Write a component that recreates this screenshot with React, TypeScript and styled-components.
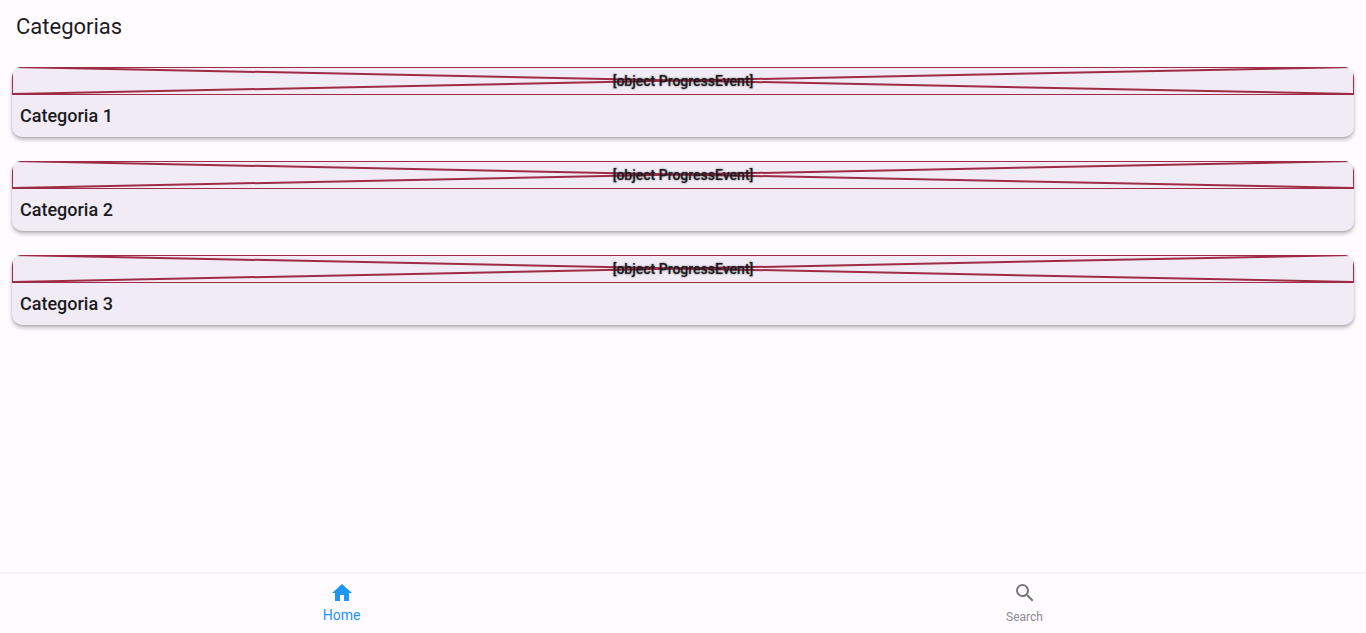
import React from "react";
import styled, { createGlobalStyle } from "styled-components";

const GlobalStyle = createGlobalStyle`
  * { box-sizing: border-box; }
  body {
    margin: 0;
    background: #fffbff;
    color: #1c1b1f;
    font-family: Roboto, "Liberation Sans", sans-serif;
  }
`;

const Page = styled.div`
  display: flex;
  flex-direction: column;
  min-height: 100vh;
`;

const Header = styled.header`
  padding: 12px 16px 14px;
`;

const Title = styled.h1`
  margin: 0;
  font-size: 22px;
  line-height: 29px;
  font-weight: 400;
`;

const List = styled.main`
  flex: 1;
  display: flex;
  flex-direction: column;
  gap: 24px;
  padding: 12px;
`;

const Card = styled.article`
  overflow: hidden;
  border-radius: 10px;
  background: #f0ebf5;
  box-shadow: 0 3px 4px rgba(0, 0, 0, 0.24), 0 1px 2px rgba(0, 0, 0, 0.12);
`;

const Placeholder = styled.div`
  display: grid;
  height: 28px;
  border: 1px solid #9f2b44;
  place-items: center;

  > * {
    grid-area: 1 / 1;
  }
`;

const Cross = styled.svg`
  display: block;
  width: 100%;
  height: 26px;
  overflow: visible;

  line {
    stroke: #9f2b44;
    stroke-width: 2px;
    vector-effect: non-scaling-stroke;
  }
`;

const ErrorText = styled.span`
  position: relative;
  font-size: 14px;
  line-height: 20px;
  font-weight: 500;
  text-shadow: 0 0 2px rgba(0, 0, 0, 0.6);
`;

const CardTitle = styled.h2`
  margin: 0;
  padding: 8px;
  font-size: 18px;
  line-height: 26px;
  font-weight: 500;
`;

const NavBar = styled.nav`
  display: flex;
  height: 61px;
  border-top: 2px solid #f5f1f6;
`;

const NavLink = styled.a<{ $active?: boolean }>`
  flex: 1;
  display: flex;
  flex-direction: column;
  align-items: center;
  padding-top: 7px;
  color: ${(p) => (p.$active ? "#2196f3" : "#757477")};
  font-size: ${(p) => (p.$active ? 14 : 12)}px;
  line-height: ${(p) => (p.$active ? 20 : 24)}px;
  text-decoration: none;
`;

const NavIcon = styled.svg`
  flex: none;
  width: 24px;
  height: 24px;
  fill: currentColor;
`;

const NavLabel = styled.span<{ $active?: boolean }>`
  color: ${(p) => (p.$active ? "#2196f3" : "#8b898c")};
`;

const categories = ["Categoria 1", "Categoria 2", "Categoria 3"];

export default function App() {
  return (
    <>
      <GlobalStyle />
      <Page>
        <Header>
          <Title>Categorias</Title>
        </Header>
        <List>
          {categories.map((name) => (
            <Card key={name}>
              <Placeholder>
                <Cross viewBox="0 0 100 26" preserveAspectRatio="none" aria-hidden="true">
                  <line x1="0" y1="-1" x2="100" y2="26" />
                  <line x1="100" y1="-1" x2="0" y2="26" />
                </Cross>
                <ErrorText>[object ProgressEvent]</ErrorText>
              </Placeholder>
              <CardTitle>{name}</CardTitle>
            </Card>
          ))}
        </List>
        <NavBar>
          <NavLink href="#home" $active aria-current="page">
            <NavIcon viewBox="0 0 24 24" aria-hidden="true">
              <path d="M10 20v-6h4v6h5v-8h3L12 3 2 12h3v8z" />
            </NavIcon>
            <NavLabel $active>Home</NavLabel>
          </NavLink>
          <NavLink href="#search">
            <NavIcon viewBox="0 0 24 24" aria-hidden="true">
              <path d="M15.5 14h-.79l-.28-.27A6.471 6.471 0 0 0 16 9.5 6.5 6.5 0 1 0 9.5 16c1.61 0 3.09-.59 4.23-1.57l.27.28v.79l5 4.99L20.49 19l-4.99-5zm-6 0C7.01 14 5 11.99 5 9.5S7.01 5 9.5 5 14 7.01 14 9.5 11.99 14 9.5 14z" />
            </NavIcon>
            <NavLabel>Search</NavLabel>
          </NavLink>
        </NavBar>
      </Page>
    </>
  );
}
